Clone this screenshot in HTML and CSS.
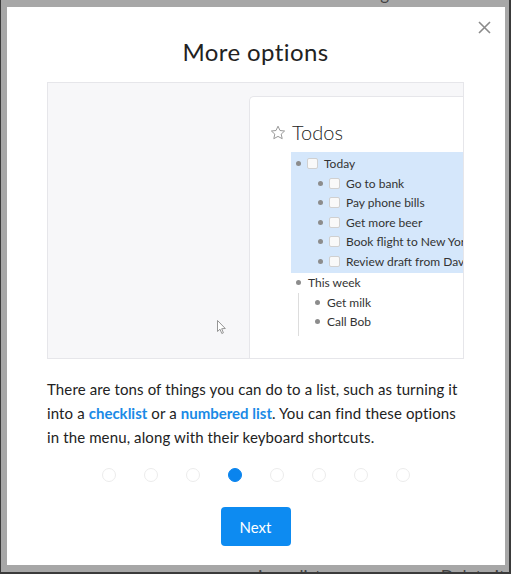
FILE: index.html
```html
<!DOCTYPE html>
<html>
<head>
<meta charset="utf-8">
<link rel="stylesheet" href="styles.css">
</head>
<body>
<div class="backdrop">
  <div class="bg-top">Without the hassle of formatting</div>
  <div class="bg-bottom"><span class="bg-mid">zoom in on lists</span><span class="bg-right">Delete it</span></div>
</div>
<div class="overlay"></div>
<div class="modal">
  <button class="close" aria-label="Close">
    <svg width="13" height="13" viewBox="0 0 13 13"><path d="M1 1L12 12M12 1L1 12" stroke="#8a8a8a" stroke-width="1.6" fill="none"/></svg>
  </button>
  <h1 class="title">More options</h1>
  <div class="preview">
    <div class="card">
      <div class="card-title">
        <svg class="star" width="16" height="16" viewBox="0 0 16 16"><path d="M8 1.2l2 4.3 4.6.5-3.4 3.1 1 4.6L8 11.4l-4.2 2.3 1-4.6L1.4 6l4.6-.5z" fill="none" stroke="#9a9a9a" stroke-width="1"/></svg>
        <span>Todos</span>
      </div>
      <div class="list">
        <div class="selected">
          <div class="row"><span class="dot"></span><span class="cb"></span><span class="txt">Today</span></div>
          <div class="row sub"><span class="dot"></span><span class="cb"></span><span class="txt">Go to bank</span></div>
          <div class="row sub"><span class="dot"></span><span class="cb"></span><span class="txt">Pay phone bills</span></div>
          <div class="row sub"><span class="dot"></span><span class="cb"></span><span class="txt">Get more beer</span></div>
          <div class="row sub"><span class="dot"></span><span class="cb"></span><span class="txt">Book flight to New York</span></div>
          <div class="row sub"><span class="dot"></span><span class="cb"></span><span class="txt">Review draft from David</span></div>
        </div>
        <div class="group">
          <div class="row"><span class="dot"></span><span class="txt">This week</span></div>
          <div class="children">
            <div class="row sub2"><span class="dot"></span><span class="txt">Get milk</span></div>
            <div class="row sub2"><span class="dot"></span><span class="txt">Call Bob</span></div>
          </div>
        </div>
      </div>
    </div>
    <svg class="cursor" width="10" height="15" viewBox="0 0 10 15"><path d="M0.5 0.5L0.5 11.5L3 9.2L4.8 13.5L6.4 12.8L4.7 8.7L8.3 8.5Z" fill="#fff" stroke="#8a8a8a" stroke-width="0.9"/></svg>
  </div>
  <p class="desc">There are tons of things you can do to a list, such as turning it into a <a href="#">checklist</a> or a <a href="#">numbered list</a>. You can find these options in the menu, along with their keyboard shortcuts.</p>
  <div class="dots">
    <span class="pg"></span><span class="pg"></span><span class="pg"></span><span class="pg active"></span><span class="pg"></span><span class="pg"></span><span class="pg"></span><span class="pg"></span>
  </div>
  <button class="next">Next</button>
</div>
</body>
</html>
```
FILE: styles.css
```css
* { box-sizing: border-box; }
html, body { margin: 0; padding: 0; }
body {
  width: 511px;
  height: 574px;
  position: relative;
  overflow: hidden;
  background: #ffffff;
  font-family: "Lato", "Liberation Sans", sans-serif;
  border-left: 1px solid #3a3a3a;
  border-right: 2px solid #3a3a3a;
  border-bottom: 2px solid #3a3a3a;
}
.backdrop {
  display: flex;
  flex-direction: column;
  justify-content: space-between;
  height: 100%;
  font-size: 17px;
  color: #222;
}
.bg-top { margin-top: -17px; padding-left: 145px; }
.bg-bottom { display: flex; margin-bottom: -15px; padding-left: 212px; }
.bg-right { margin-left: auto; margin-right: 4px; }
.overlay {
  position: absolute;
  inset: 0;
  background: rgba(95, 95, 95, 0.55);
}
.modal {
  position: absolute;
  left: 6px;
  top: 7px;
  width: 498px;
  height: 558px;
  background: #fff;
  display: flex;
  flex-direction: column;
  align-items: center;
  padding: 0 41px 0 40px;
}
.close {
  position: absolute;
  right: 14px;
  top: 14px;
  border: 0;
  background: none;
  padding: 0;
  width: 13px;
  height: 13px;
  display: flex;
}
.title {
  margin: 27px 0 0;
  font-weight: 400;
  font-size: 24px;
  line-height: 36px;
  color: #222;
  letter-spacing: 0.4px;
}
.preview {
  position: relative;
  margin-top: 12px;
  width: 417px;
  height: 277px;
  background: #f7f7f9;
  border: 1px solid #e6e6ea;
  overflow: hidden;
  display: flex;
  justify-content: flex-end;
  padding-top: 13px;
}
.card {
  width: 214px;
  background: #fff;
  border: 1px solid #e6e6ea;
  border-right: 0;
  border-bottom: 0;
  border-radius: 5px 0 0 0;
  padding: 22px 0 0 20px;
  white-space: nowrap;
}
.card-title {
  display: flex;
  align-items: center;
  gap: 6px;
  font-size: 20px;
  font-weight: 300;
  color: #222;
  height: 26px;
}
.star { margin-top: 1px; }
.list {
  margin-top: 7px;
  margin-left: 21px;
  font-size: 12px;
  color: #333;
}
.selected {
  background: #d5e7fb;
  padding: 2px 0 2px;
}
.row {
  display: flex;
  align-items: center;
  height: 19.5px;
  padding-left: 5px;
}
.row.sub { padding-left: 27px; }
.dot {
  width: 5px;
  height: 5px;
  border-radius: 50%;
  background: #8c8c8c;
  flex: none;
}
.cb {
  width: 11px;
  height: 11px;
  border: 1px solid #d0d0d0;
  border-radius: 2px;
  background: #f9f9f9;
  margin-left: 6px;
  flex: none;
}
.txt { margin-left: 6px; }
.row .dot + .txt { margin-left: 7px; }
.group { padding-top: 0; }
.children {
  margin-left: 7px;
  border-left: 1px solid #ddd;
  padding-bottom: 4px;
}
.row.sub2 { padding-left: 16px; }
.cursor {
  position: absolute;
  left: 169px;
  top: 237px;
}
.desc {
  margin: 18px 0 0;
  width: 417px;
  font-size: 15px;
  line-height: 24px;
  color: #222;
  letter-spacing: 0.12px;
}
.desc a {
  color: #1a8ae6;
  font-weight: 700;
  text-decoration: none;
  letter-spacing: 0;
}
.dots {
  display: flex;
  gap: 28px;
  margin-top: 19px;
}
.pg {
  width: 14px;
  height: 14px;
  border-radius: 50%;
  border: 1px solid #ececec;
}
.pg.active {
  background: #0a84ee;
  border-color: #0a84ee;
}
.next {
  margin-top: 25px;
  width: 70px;
  height: 39px;
  border: 0;
  border-radius: 4px;
  background: #0d8bf1;
  color: #fff;
  font-family: "Lato", "Liberation Sans", sans-serif;
  font-size: 15px;
}
```
